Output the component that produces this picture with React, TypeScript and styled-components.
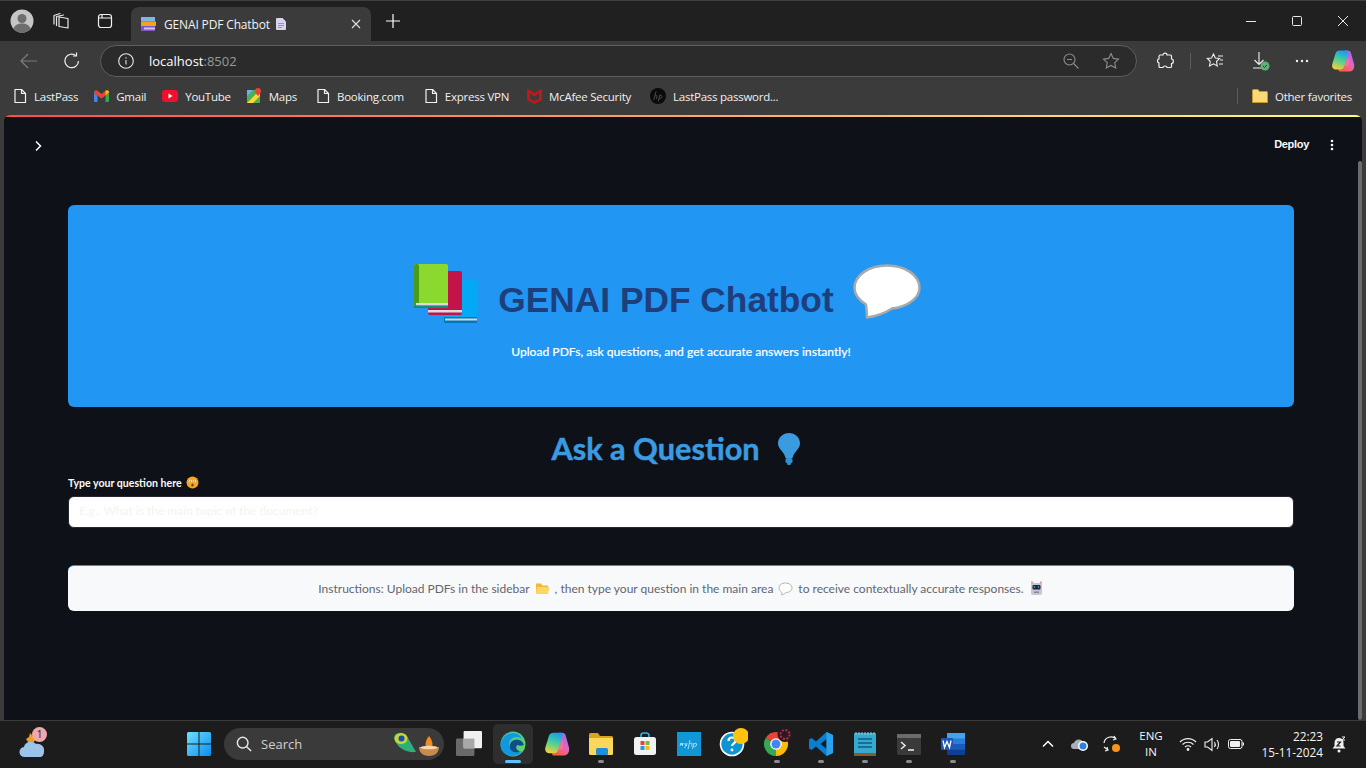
import React from 'react';
import styled, { createGlobalStyle } from 'styled-components';

const Global = createGlobalStyle`
	html, body {
		margin: 0;
		padding: 0;
		background: #202020;
	}
	* {
		box-sizing: border-box;
	}
`;

const UI = `'Open Sans', 'Noto Sans', sans-serif`;
const ST = `Lato, 'Noto Sans', sans-serif`;

const Screen = styled.div`
	width: 1366px;
	height: 768px;
	display: flex;
	flex-direction: column;
	overflow: hidden;
	background: #202020;
	font-family: ${UI};
	color: #fff;
`;

const TabStrip = styled.div`
	height: 41px;
	flex: none;
	display: flex;
	align-items: flex-end;
	padding-left: 10px;
	background: #202020;
	border-top: 1px solid #3f3f3f;
`;

const StripIcon = styled.div<{ $w: number }>`
	width: ${(p) => p.$w}px;
	height: 40px;
	flex: none;
	display: flex;
	align-items: center;
	justify-content: flex-start;
`;

const Tab = styled.div`
	width: 240px;
	height: 34px;
	flex: none;
	display: flex;
	align-items: center;
	padding: 0 10px 0 9px;
	background: #3b3b3b;
	border-radius: 8px 8px 0 0;
	font-size: 12px;
	color: #f2f2f2;
`;

const TabTitle = styled.span`
	margin-left: 8px;
	flex: 1;
	display: flex;
	align-items: center;
	gap: 6px;
	white-space: nowrap;
	letter-spacing: -0.15px;
`;

const NewTab = styled.div`
	width: 44px;
	height: 40px;
	display: flex;
	align-items: center;
	justify-content: center;
	flex: none;
`;

const WindowControls = styled.div`
	margin-left: auto;
	display: flex;
	align-self: stretch;
	align-items: center;
`;

const WindowButton = styled.div`
	width: 46px;
	height: 40px;
	display: flex;
	align-items: center;
	justify-content: center;
`;

const Toolbar = styled.div`
	height: 41px;
	flex: none;
	display: flex;
	align-items: center;
	background: #3b3b3b;
	padding: 0 0 1px 19px;
`;

const NavIcon = styled.div<{ $w: number }>`
	width: ${(p) => p.$w}px;
	height: 24px;
	flex: none;
	display: flex;
	align-items: center;
`;

const AddressBar = styled.div`
	width: 1037px;
	height: 32px;
	margin-left: -3px;
	flex: none;
	display: flex;
	align-items: center;
	background: #2b2b2b;
	border: 1px solid #5e5e5e;
	border-radius: 16px;
	padding: 0 16px 0 17px;
	font-size: 13px;
`;

const Url = styled.span`
	margin-left: 15px;
	flex: 1;
	color: #fff;
	font-weight: 500;
`;

const UrlPort = styled.span`
	color: #9a9a9a;
	font-weight: 400;
`;

const ToolbarRight = styled.div`
	display: flex;
	align-items: center;
	margin-left: 20px;
	flex: 1;
`;

const Glyph = styled.span<{ $ml: number }>`
	display: flex;
	margin-left: ${(p) => p.$ml}px;
`;

const ToolbarDivider = styled.div`
	width: 1px;
	height: 16px;
	margin: 0 15px;
	background: #5c5c5c;
`;

const Bookmarks = styled.div`
	height: 33px;
	flex: none;
	display: flex;
	align-items: center;
	background: #3b3b3b;
	padding: 0 14px 5px 13px;
	font-size: 11.5px;
	color: #f0f0f0;
`;

const Bookmark = styled.div<{ $gap?: number }>`
	display: flex;
	align-items: center;
	gap: 7px;
	margin-right: ${(p) => p.$gap ?? 17}px;
	white-space: nowrap;
	letter-spacing: -0.25px;
`;

const BookmarkDivider = styled.div`
	margin-left: auto;
	width: 1px;
	height: 16px;
	background: #5c5c5c;
	margin-right: 14px;
`;

const PageFrame = styled.div`
	height: 605px;
	flex: none;
	padding: 0 4px;
	background: #3b3b3b;
`;

const BrowserPage = styled.div`
	height: 100%;
	display: flex;
	flex-direction: column;
	position: relative;
	background: #0e1117;
	border-radius: 6px 6px 0 0;
	overflow: hidden;
`;

const Decoration = styled.div`
	height: 2px;
	flex: none;
	background: linear-gradient(90deg, #ff4b4b, #fffd80);
`;

const StHeader = styled.div`
	height: 54px;
	flex: none;
	display: flex;
	align-items: center;
	padding: 4px 28px 0 28px;
`;

const DeployLabel = styled.span`
	margin: 0 21px 4px auto;
	font-family: 'Liberation Sans', sans-serif;
	font-size: 11px;
	font-weight: 700;
	letter-spacing: -0.3px;
	color: #fafafa;
`;

const MenuDots = styled.svg`
	margin-bottom: 2px;
`;

const Main = styled.div`
	display: flex;
	flex-direction: column;
	padding: 34px 68px 0 64px;
`;

const Hero = styled.div`
	height: 202px;
	display: flex;
	flex-direction: column;
	align-items: center;
	background: #2196f3;
	border-radius: 6px;
	padding-top: 59px;
`;

const HeroTitle = styled.div`
	display: flex;
	align-items: flex-start;
	height: 60px;
	margin-right: 27px;
`;

const HeroText = styled.h1`
	margin: 16px 19px 0 20px;
	font-family: 'Liberation Sans', sans-serif;
	font-size: 35.3px;
	line-height: 40px;
	font-weight: 700;
	color: #1e3f7c;
	white-space: nowrap;
`;

const HeroSub = styled.p`
	margin: 19px 0 0;
	font-family: ${ST};
	font-size: 12.1px;
	line-height: 18px;
	font-weight: 500;
	color: #fff;
	-webkit-text-stroke: 0.15px #fff;
`;

const AskTitle = styled.h2`
	margin: 22px 10px 0 0;
	height: 40px;
	display: flex;
	justify-content: center;
	align-items: center;
	gap: 17px;
	font-family: ${ST};
	font-size: 30.7px;
	line-height: 40px;
	font-weight: 700;
	color: #3a9be0;
	-webkit-text-stroke: 0.5px #3a9be0;
`;

const InputLabel = styled.label`
	display: flex;
	align-items: center;
	gap: 4px;
	margin-top: 6px;
	height: 16px;
	font-family: ${ST};
	font-size: 10.6px;
	font-weight: 700;
	color: #fafafa;
`;

const QuestionInput = styled.input`
	display: block;
	width: 100%;
	height: 32px;
	margin-top: 5px;
	padding: 0 10px 4px;
	background: #fff;
	border: 1px solid #262730;
	border-radius: 6px;
	font-family: ${ST};
	font-size: 12px;
	outline: none;
	&::placeholder {
		color: #f3f3f3;
	}
`;

const InstructionBox = styled.div`
	height: 46px;
	margin-top: 37px;
	display: flex;
	align-items: center;
	justify-content: center;
	gap: 5px;
	background: #f8f9fa;
	border-top: 1px solid #2196f3;
	border-radius: 6px;
	font-family: ${ST};
	font-size: 12px;
	color: #5f6672;
	white-space: pre;
`;

const ScrollThumb = styled.div`
	position: absolute;
	right: 0;
	top: 46px;
	bottom: 0;
	width: 4px;
	background: #6b6b6b;
	border-radius: 2px;
`;

const Taskbar = styled.div`
	height: 48px;
	flex: none;
	margin-top: auto;
	display: flex;
	align-items: center;
	padding-bottom: 1px;
	background: #1c1c1c;
	border-top: 1px solid #3a3a3a;
`;

const Weather = styled.div`
	width: 187px;
	padding-left: 19px;
	flex: none;
	display: flex;
	align-items: center;
`;

const WeatherIcon = styled.div`
	width: 28px;
	height: 28px;
	position: relative;
`;

const Badge = styled.span`
	position: absolute;
	left: 13px;
	top: -3px;
	width: 15px;
	height: 15px;
	display: flex;
	align-items: center;
	justify-content: center;
	border-radius: 50%;
	background: #f4a6ae;
	font-size: 10px;
	line-height: 15px;
	color: #1c1c1c;
`;

const SearchBox = styled.div`
	width: 220px;
	height: 32px;
	margin-left: 13px;
	flex: none;
	display: flex;
	align-items: center;
	padding: 0 3px 0 12px;
	background: #3a3a3a;
	border-radius: 16px;
	font-size: 13px;
	color: #d0d0d0;
`;

const SearchLabel = styled.span`
	margin-left: 9px;
	flex: 1;
`;

const TaskIcons = styled.div`
	display: flex;
	align-items: center;
	gap: 4px;
	margin-left: 5px;
`;

const TaskIcon = styled.div<{ $active?: boolean; $dot?: boolean }>`
	width: 40px;
	height: 40px;
	display: flex;
	align-items: center;
	justify-content: center;
	position: relative;
	border-radius: 5px;
	background: ${(p) => (p.$active ? '#2e2e2e' : 'transparent')};
	&::after {
		content: '';
		display: ${(p) => (p.$active || p.$dot ? 'block' : 'none')};
		position: absolute;
		bottom: 1px;
		left: 50%;
		transform: translateX(-50%);
		width: ${(p) => (p.$active ? 16 : 6)}px;
		height: 3px;
		border-radius: 2px;
		background: ${(p) => (p.$active ? '#5cc2ff' : '#8c8c8c')};
	}
`;

const Tray = styled.div`
	margin-left: auto;
	padding-right: 11px;
	display: flex;
	align-items: center;
	color: #f5f5f5;
	font-size: 11.5px;
`;

const TrayIcon = styled.div<{ $w: number; $ml?: number }>`
	width: ${(p) => p.$w}px;
	margin-left: ${(p) => p.$ml ?? 0}px;
	display: flex;
	align-items: center;
	justify-content: center;
	flex: none;
`;

const Lang = styled.div`
	width: 44px;
	margin-left: 1px;
	text-align: center;
	line-height: 16px;
`;

const Clock = styled.div`
	width: 72px;
	margin-left: 3px;
	text-align: right;
	line-height: 16px;
	font-size: 11.8px;
`;

const stroke = { fill: 'none', stroke: 'currentColor', strokeWidth: 1.2, strokeLinecap: 'round', strokeLinejoin: 'round' } as const;

const Page = () => (
	<svg width="14" height="16" viewBox="0 0 14 16" {...stroke} color="#f2f2f2">
		<path d="M2 1.5h6.5L12.5 5.500v9H2z" />
		<path d="M8.500 1.500v4h4" />
	</svg>
);

const Books = () => (
	<svg width="64" height="59" viewBox="0 0 64 59">
		<rect x="30" y="16" width="33" height="43" rx="2" fill="#03a9f4" />
		<rect x="30" y="53" width="33" height="6" rx="1" fill="#0277bd" />
		<rect x="31" y="54.500" width="32" height="2" fill="#cfd8dc" />
		<rect x="14" y="7" width="34" height="44" rx="2" fill="#c2134b" />
		<rect x="14" y="46" width="34" height="2.500" fill="#d8dcdc" />
		<rect x="0" y="0" width="34" height="44" rx="2" fill="#8bd92f" />
		<rect x="0" y="0" width="5" height="44" rx="2" fill="#4a9a1c" />
		<rect x="2" y="39" width="32" height="2.500" fill="#d8dcdc" />
		<rect x="0" y="41.500" width="34" height="2.500" fill="#0f8f77" />
	</svg>
);

const Bubble = () => (
	<svg width="68" height="55" viewBox="0 0 68 55">
		<path
			d="M34 1.500C52 1.500 66.500 11 66.500 24C66.500 34 54 43 39 44.500C32 49 25 52 14 53.500C14 49 13.500 44 13 40.500C6 36 1.500 30 1.500 24C1.500 11 16 1.500 34 1.500Z"
			fill="#fff"
			stroke="#a9a9a9"
			strokeWidth="2.500"
			strokeLinejoin="round"
		/>
	</svg>
);

const Bulb = () => (
	<svg width="24" height="34" viewBox="0 0 24 34">
		<path d="M12 1C18 1 23 5.500 23 11.500C23 17 16.500 20 15.500 26H8.500C7.500 20 1 17 1 11.500C1 5.500 6 1 12 1Z" fill="#3a9be0" />
		<rect x="8.500" y="26" width="7" height="5" rx="1.500" fill="#3090d0" />
		<rect x="10" y="30" width="4" height="3" rx="1.500" fill="#3090d0" />
	</svg>
);

const ThinkFace = () => (
	<svg width="13" height="14" viewBox="0 0 13 14">
		<circle cx="6.500" cy="6.500" r="6" fill="#f5a623" />
		<circle cx="4.500" cy="5" r="1.300" fill="#fff" />
		<circle cx="8.500" cy="5" r="1.300" fill="#fff" />
		<circle cx="4.500" cy="5" r=".6" fill="#332" />
		<circle cx="8.500" cy="5" r=".6" fill="#332" />
		<ellipse cx="6.500" cy="9" rx="1.200" ry="1.500" fill="#7a3b12" />
	</svg>
);

const SmallFolder = () => (
	<svg width="15" height="13" viewBox="0 0 15 13">
		<path d="M1 1.500h5l1.500 2H13v8H1z" fill="#f5b82e" />
		<path d="M2 5h12.500l-1.500 7H1z" fill="#fdd663" />
	</svg>
);

const SmallBubble = () => (
	<svg width="15" height="14" viewBox="0 0 15 14">
		<path d="M7.500 1C11 1 14 3 14 6S11 10.500 8 10.500C6.500 12 5 12.500 3.500 13C4 12 4 11 3.500 10C2 9 1 7.500 1 6C1 3 4 1 7.500 1Z" fill="#fff" stroke="#b5b5b5" strokeWidth="1" />
	</svg>
);

const Robot = () => (
	<svg width="15" height="15" viewBox="0 0 15 15">
		<rect x="2" y="2" width="11" height="12" rx="2" fill="#c9c3d2" />
		<rect x="3.500" y="4" width="8" height="4.500" rx="1" fill="#1f2733" />
		<circle cx="5.500" cy="6" r=".8" fill="#4fc3f7" />
		<circle cx="9.500" cy="6" r=".8" fill="#4fc3f7" />
		<path d="M3 .5v2M12 .5v2" stroke="#e53935" strokeWidth="1" />
		<rect x="5" y="10.500" width="5" height="1.500" fill="#8a8494" />
	</svg>
);

const Windows = () => (
	<svg width="24" height="24" viewBox="0 0 24 24">
		<defs>
			<linearGradient id="win" x1="0" y1="0" x2="1" y2="1">
				<stop offset="0" stopColor="#6ee0fb" />
				<stop offset="1" stopColor="#0a8df0" />
			</linearGradient>
		</defs>
		<path d="M0 1.500A1.500 1.500 0 0 1 1.500 0H11.500V11.500H0ZM12.500 0H22.500A1.500 1.500 0 0 1 24 1.500V11.500H12.500ZM0 12.500H11.500V24H1.500A1.500 1.500 0 0 1 0 22.500ZM12.500 12.500H24V22.500A1.500 1.500 0 0 1 22.500 24H12.500Z" fill="url(#win)" />
	</svg>
);

const Edge = () => (
	<svg width="26" height="26" viewBox="0 0 24 24">
		<defs>
			<linearGradient id="edgeA" x1="0" y1="0" x2="1" y2="1">
				<stop offset="0" stopColor="#2bc4b4" />
				<stop offset="1" stopColor="#6ed85a" />
			</linearGradient>
		</defs>
		<circle cx="12" cy="12" r="11.500" fill="url(#edgeA)" />
		<path d="M.5 13C1 7 6 2 12 2c4 0 7 2 8 5-3-2.500-9-2-11 2-2 4 1 9 6 10 2 .5 4 .3 5.500-.5-2 3-5 4.500-8.500 4.500C5.500 23.500 .5 19 .5 13Z" fill="#1398e0" />
		<path d="M9 14c0-4 3-6 6.500-6 3.500 0 6 2 6.500 5-2 1-4 .5-6 0-2 2-1 5 2.500 5.500-1 1-3 1.500-4.500 1-3-.5-5-2.500-5-5.500Z" fill="#114c8c" />
	</svg>
);

const Copilot = ({ id, size = 24 }: { id: string; size?: number }) => (
	<svg width={size} height={size} viewBox="0 0 24 24">
		<defs>
			<linearGradient id={`${id}A`} x1=".6" y1="0" x2=".3" y2="1">
				<stop offset="0" stopColor="#1f9bf0" />
				<stop offset=".45" stopColor="#3fcf9f" />
				<stop offset="1" stopColor="#f4d13a" />
			</linearGradient>
			<linearGradient id={`${id}B`} x1=".8" y1="0" x2=".3" y2="1">
				<stop offset="0" stopColor="#8a6cf0" />
				<stop offset=".5" stopColor="#e463c8" />
				<stop offset="1" stopColor="#f8603c" />
			</linearGradient>
		</defs>
		<path d="M14 1.500H17C18.500 1.500 19.500 2.500 20 4L23 15C24 19 22 22.500 18.500 22.500H9C7.500 22.500 7 21 8 19.500L12 14Z" fill={`url(#${id}B)`} />
		<path d="M8.500 1.500H15C16.800 1.500 17.500 3 17 4.500L13.500 16.500C12.800 19 11.500 20.500 9 20.500H5C2 20.500 .5 18 1.300 15L4.500 4.500C5 2.800 6.500 1.500 8.500 1.500Z" fill={`url(#${id}A)`} />
		<path d="M11 17h4.500c1.300 0 2-.8 2-2V8l-3 6.500c-.5 1.300-2 2.500-3.500 2.500Z" fill="#f27a8c" />
	</svg>
);

const Explorer = () => (
	<svg width="24" height="22" viewBox="0 0 24 22">
		<path d="M0 1.500A1.500 1.500 0 0 1 1.500 0H9l2 3h11.500A1.500 1.500 0 0 1 24 4.500V8H0Z" fill="#d9a520" />
		<path d="M0 5h24v15.500A1.500 1.500 0 0 1 22.500 22H1.500A1.500 1.500 0 0 1 0 20.500Z" fill="#fbd75b" />
		<rect x="7" y="15" width="12" height="7" rx="1.500" fill="#1f8fd6" />
	</svg>
);

const Store = () => (
	<svg width="24" height="24" viewBox="0 0 24 24">
		<path d="M8 6V3.500A2.500 2.500 0 0 1 10.500 1h3A2.500 2.500 0 0 1 16 3.500V6" fill="none" stroke="#2bb5ee" strokeWidth="1.600" />
		<rect x="1" y="5" width="22" height="18" rx="2.500" fill="#f2f2f2" />
		<rect x="7.500" y="9" width="4" height="4" fill="#ea4335" />
		<rect x="12.500" y="9" width="4" height="4" fill="#6fbf3b" />
		<rect x="7.500" y="14" width="4" height="4" fill="#1e9be8" />
		<rect x="12.500" y="14" width="4" height="4" fill="#fbbc05" />
	</svg>
);

const HpApp = () => (
	<svg width="24" height="24" viewBox="0 0 24 24">
		<rect width="24" height="24" fill="#0f97d6" />
		<path d="M3 14l1-3 1 2 1-2-.7 3M8 11l.6 3-1 2M10 11l-.6 3M13 8l-2 9M13 12c1.500-1.500 2.500-1 2 .5l-.7 2M17 11l-1.500 6M17 12c2-1.500 3-.5 2.500 1-.5 1.500-2 2-3 1.500" fill="none" stroke="#cbeefb" strokeWidth=".8" />
	</svg>
);

const Help = () => (
	<svg width="30" height="32" viewBox="0 0 30 32">
		<circle cx="14" cy="16" r="11.500" fill="#0f93d2" stroke="#fff" strokeWidth="1.600" />
		<path d="M10.500 13c0-2 1.500-3.500 3.500-3.500s3.500 1.300 3.500 3.200c0 2.800-3.500 2.800-3.500 5.300" fill="none" stroke="#fff" strokeWidth="2.200" />
		<circle cx="14" cy="22" r="1.400" fill="#fff" />
		<circle cx="23" cy="8" r="8" fill="#fdc30f" />
	</svg>
);

const Chrome = () => (
	<svg width="30" height="30" viewBox="0 0 30 30">
		<path d="M14 15L3.600 9A12 12 0 0 1 24.400 9Z" fill="#ea4335" />
		<path d="M14 15L24.400 9A12 12 0 0 1 14 27Z" fill="#fbbc05" />
		<path d="M14 15L14 27A12 12 0 0 1 3.600 9Z" fill="#34a853" />
		<circle cx="14" cy="15" r="5.800" fill="#fff" />
		<circle cx="14" cy="15" r="4.500" fill="#4285f4" />
		<circle cx="23" cy="5.500" r="7.500" fill="#2a1a20" />
		<circle cx="23" cy="5.500" r="4.500" fill="none" stroke="#a83250" strokeWidth="2" strokeDasharray="2 1.500" />
	</svg>
);

const VsCode = () => (
	<svg width="24" height="24" viewBox="0 0 24 24">
		<path d="M17.500 0 24 3v18l-6.500 3L7 14.500 2.500 18 0 16.500V7.500L2.500 6 7 9.500ZM17.500 7l-6 5 6 5Z" fill="#0a7fd0" />
		<path d="M17.500 0 24 3v18l-6.500 3Z" fill="#2ba0ee" />
	</svg>
);

const Notepad = () => (
	<svg width="22" height="24" viewBox="0 0 22 24">
		<rect y="1" width="22" height="23" rx="1" fill="#35a9cf" />
		<rect y="21" width="22" height="3" fill="#8c5a24" />
		<path d="M4 7h14M4 11h14M4 15h14" stroke="#0f5c7c" strokeWidth="1.600" />
		<path d="M2 0v3M5 0v3M8 0v3M11 0v3M14 0v3M17 0v3M20 0v3" stroke="#7fd3ea" strokeWidth="1" />
	</svg>
);

const Terminal = () => (
	<svg width="24" height="21" viewBox="0 0 24 21">
		<rect width="24" height="21" rx="1.500" fill="#3a3a3a" />
		<rect width="24" height="4" fill="#6b6b6b" />
		<path d="M4 8l4 3.500L4 15" fill="none" stroke="#e6e6e6" strokeWidth="1.600" />
		<path d="M11 16h6" stroke="#e6e6e6" strokeWidth="1.600" />
	</svg>
);

const Word = () => (
	<svg width="24" height="22" viewBox="0 0 24 22">
		<rect x="6" width="18" height="22" rx="1" fill="#2b7cd3" />
		<rect x="6" y="0" width="18" height="5.500" fill="#41a5ee" />
		<rect x="6" y="11" width="18" height="5.500" fill="#185abd" />
		<rect x="6" y="16.500" width="18" height="5.500" fill="#103f91" />
		<rect y="5" width="12" height="12" rx="1" fill="#1a57b5" />
		<path d="M2 7.500l1.500 7 2.500-6 2.500 6 1.500-7" fill="none" stroke="#fff" strokeWidth="1.300" />
	</svg>
);

const Chevron = ({ up }: { up?: boolean }) => (
	<svg width="12" height="12" viewBox="0 0 12 12" fill="none" stroke="#fff" strokeWidth="1.500">
		{up ? <path d="M1 8.500l5-5 5 5" /> : <path d="M4 1.500l4.500 4.500L4 10.500" />}
	</svg>
);

export default function App() {
	return (
		<Screen>
			<Global />
			<TabStrip>
				<StripIcon $w={42}>
					<svg width="24" height="24" viewBox="0 0 24 24">
						<circle cx="12" cy="12" r="11.500" fill="#c6c6c6" />
						<circle cx="12" cy="9.500" r="4.500" fill="#6e6e6e" />
						<path d="M3.500 20c1-4 4.500-5.500 8.500-5.500s7.500 1.500 8.500 5.500a11.500 11.500 0 0 1-17 0Z" fill="#6e6e6e" />
					</svg>
				</StripIcon>
				<StripIcon $w={45}>
					<svg width="18" height="18" viewBox="0 0 18 18" {...stroke} color="#e6e6e6">
						<path d="M7 5l9 1.500v9.500l-9-1.500zM4.500 13.500V4.500l7-1.500M2 12V3.500L8 1.500" />
					</svg>
				</StripIcon>
				<StripIcon $w={34}>
					<svg width="16" height="16" viewBox="0 0 16 16" {...stroke} color="#f0f0f0">
						<rect x="1.500" y="1.500" width="13" height="13" rx="2.500" />
						<path d="M1.500 5h13M5 1.500V5" />
					</svg>
				</StripIcon>
				<Tab>
					<svg width="16" height="16" viewBox="0 0 16 16">
						<rect x="1" y="1" width="14" height="4.500" fill="#7db6e8" />
						<rect x="1" y="5.500" width="15" height="4.500" fill="#f5a21c" />
						<rect x="1" y="10" width="14" height="5" fill="#7e57c2" />
						<rect x="4" y="11.500" width="11" height="2" fill="#cfc6e6" />
					</svg>
					<TabTitle>
						GENAI PDF Chatbot
						<svg width="10" height="12" viewBox="0 0 10 12">
							<path d="M0 1a1 1 0 0 1 1-1h5.500L10 3.500V11a1 1 0 0 1-1 1H1a1 1 0 0 1-1-1Z" fill="#dcd3ee" />
							<path d="M2 5.500h6M2 7.500h6M2 9.500h4" stroke="#9a8fb8" strokeWidth="1" />
						</svg>
					</TabTitle>
					<svg width="10" height="10" viewBox="0 0 10 10" stroke="#e0e0e0" strokeWidth="1.100">
						<path d="M1 1l8 8M9 1l-8 8" />
					</svg>
				</Tab>
				<NewTab>
					<svg width="14" height="14" viewBox="0 0 14 14" stroke="#fff" strokeWidth="1.200">
						<path d="M7 0v14M0 7h14" />
					</svg>
				</NewTab>
				<WindowControls>
					<WindowButton>
						<svg width="10" height="10" viewBox="0 0 10 10" stroke="#e8e8e8" strokeWidth="1">
							<path d="M0 5.500h10" />
						</svg>
					</WindowButton>
					<WindowButton>
						<svg width="10" height="10" viewBox="0 0 10 10" fill="none" stroke="#e8e8e8" strokeWidth="1">
							<rect x=".5" y=".5" width="9" height="9" rx="1" />
						</svg>
					</WindowButton>
					<WindowButton>
						<svg width="10" height="10" viewBox="0 0 10 10" stroke="#e8e8e8" strokeWidth="1">
							<path d="M0 0l10 10M10 0L0 10" />
						</svg>
					</WindowButton>
				</WindowControls>
			</TabStrip>
			<Toolbar>
				<NavIcon $w={44}>
					<svg width="20" height="20" viewBox="0 0 20 20" fill="none" stroke="#7d7d7d" strokeWidth="1.200">
						<path d="M2 10h16M9 3l-7 7 7 7" />
					</svg>
				</NavIcon>
				<NavIcon $w={40}>
					<svg width="18" height="18" viewBox="0 0 18 18" fill="none" stroke="#f0f0f0" strokeWidth="1.200">
						<path d="M15.500 9A6.800 6.800 0 1 1 13 3.600" />
						<path d="M13.500 .5v3.500H10" />
					</svg>
				</NavIcon>
				<AddressBar>
					<svg width="16" height="16" viewBox="0 0 16 16" fill="none" stroke="#e8e8e8" strokeWidth="1.100">
						<circle cx="8" cy="8" r="7.300" />
						<path d="M8 7v4.500M8 4.200v1.200" />
					</svg>
					<Url>
						localhost<UrlPort>:8502</UrlPort>
					</Url>
					<svg width="16" height="16" viewBox="0 0 16 16" fill="none" stroke="#8d8d8d" strokeWidth="1.100">
						<circle cx="6.500" cy="6.500" r="5.500" />
						<path d="M4 6.500h5M10.500 10.500l5 5" />
					</svg>
					<Glyph $ml={23}>
						<svg width="18" height="18" viewBox="0 0 18 18" fill="none" stroke="#8d8d8d" strokeWidth="1.100">
							<path d="M9 1.500l2.300 4.900 5.200.7-3.800 3.600 1 5.300L9 13.400l-4.700 2.600 1-5.300L1.500 7.100l5.200-.7Z" />
						</svg>
					</Glyph>
				</AddressBar>
				<ToolbarRight>
					<svg width="18" height="18" viewBox="0 0 18 18" fill="none" stroke="#f0f0f0" strokeWidth="1.200">
						<path d="M6 3c0-2.500 4-2.500 4 0h3.500a1 1 0 0 1 1 1v3c2.500 0 2.500 4.500 0 4.500v3a1 1 0 0 1-1 1H10c0-2-4-2-4 0H3a1 1 0 0 1-1-1v-3.500C0 10.500 0 7 2 7V5c0-1 .5-2 1-2Z" />
					</svg>
					<ToolbarDivider />
					<svg width="18" height="18" viewBox="0 0 18 18" fill="none" stroke="#f0f0f0" strokeWidth="1.100">
						<path d="M7.500 2l1.800 4 4.200.5-3 3 .8 4.500-3.800-2.200L3.500 14l.8-4.500-3-3L5.500 6Z" />
						<path d="M12 4h5M14 8h3M13 12h4" />
					</svg>
					<Glyph $ml={26}>
						<svg width="20" height="20" viewBox="0 0 20 20">
							<path d="M9 1v12M4.500 9l4.500 4.500L13.500 9M3 17h12" fill="none" stroke="#f0f0f0" strokeWidth="1.100" />
							<circle cx="15" cy="15" r="4.500" fill="#5db075" />
							<path d="M13 15l1.500 1.500 2.500-2.500" fill="none" stroke="#1f4a2c" strokeWidth="1" />
						</svg>
					</Glyph>
					<Glyph $ml={25}>
						<svg width="14" height="4" viewBox="0 0 14 4" fill="#f0f0f0">
							<circle cx="2" cy="2" r="1.200" />
							<circle cx="7" cy="2" r="1.200" />
							<circle cx="12" cy="2" r="1.200" />
						</svg>
					</Glyph>
					<Glyph $ml={22}>
						<Copilot id="cpTool" />
					</Glyph>
				</ToolbarRight>
			</Toolbar>
			<Bookmarks>
				<Bookmark $gap={16}><Page />LastPass</Bookmark>
				<Bookmark $gap={16}>
					<svg width="15" height="12" viewBox="0 0 15 12">
						<path d="M0 2.500V11a1 1 0 0 0 1 1h2.500V5.500Z" fill="#4285f4" />
						<path d="M15 2.500V11a1 1 0 0 1-1 1h-2.500V5.500Z" fill="#34a853" />
						<path d="M0 2.500C0 .5 2 -.5 3.500 .8L7.500 4l4-3.200C13 -.5 15 .5 15 2.500l-3.500 3L7.500 8.500l-4-3Z" fill="#ea4335" />
						<path d="M11.500 .8C13 -.5 15 .5 15 2.500l-3.500 3Z" fill="#fbbc05" />
					</svg>
					Gmail
				</Bookmark>
				<Bookmark $gap={16}>
					<svg width="16" height="12" viewBox="0 0 16 12">
						<rect width="16" height="12" rx="3" fill="#f00f2c" />
						<path d="M6.500 3.500v5l4-2.500Z" fill="#fff" />
					</svg>
					YouTube
				</Bookmark>
				<Bookmark $gap={19}>
					<svg width="15" height="16" viewBox="0 0 15 16">
						<rect y="2" width="13" height="13" fill="#4caf50" />
						<path d="M0 15L13 2v6l-7 7Z" fill="#fdd835" />
						<path d="M0 2h6L0 8Z" fill="#64b5f6" />
						<path d="M11 0a3 3 0 0 1 3 3c0 2-3 5-3 5S8 5 8 3a3 3 0 0 1 3-3Z" fill="#ea4335" />
					</svg>
					Maps
				</Bookmark>
				<Bookmark $gap={20}><Page />Booking.com</Bookmark>
				<Bookmark $gap={18}><Page />Express VPN</Bookmark>
				<Bookmark $gap={19}>
					<svg width="15" height="16" viewBox="0 0 15 16">
						<path d="M0 1l3.500 1.500L7.500 5l4-2.500L15 1v11l-7.500 4L0 12Z" fill="#c01818" />
						<path d="M3 5.500l4.500 3 4.500-3v5l-4.500 2.500L3 10.500Z" fill="#3b3b3b" />
					</svg>
					McAfee Security
				</Bookmark>
				<Bookmark>
					<svg width="16" height="16" viewBox="0 0 16 16">
						<circle cx="8" cy="8" r="8" fill="#0a0a0a" />
						<path d="M6 3.500L3.800 12M5 8c1.200-1 2.200-.7 2 .5L6.500 11M10 6.500L8.300 13.500M9.500 8c1.500-1 3-.5 2.500 1s-2 2-3 1.500" fill="none" stroke="#4a4a4a" strokeWidth="1" />
					</svg>
					LastPass password...
				</Bookmark>
				<BookmarkDivider />
				<Bookmark $gap={0}>
					<svg width="16" height="14" viewBox="0 0 16 14">
						<path d="M.5 1.500A1 1 0 0 1 1.500 .5H6l1.500 2h7a1 1 0 0 1 1 1V13.500H.5Z" fill="#fbd878" stroke="#c49a24" strokeWidth="1" />
					</svg>
					Other favorites
				</Bookmark>
			</Bookmarks>
			<PageFrame>
				<BrowserPage>
					<Decoration />
					<StHeader>
						<Chevron />
						<DeployLabel>Deploy</DeployLabel>
						<MenuDots width="4" height="12" viewBox="0 0 4 12" fill="#fafafa">
							<circle cx="2" cy="2" r="1.300" />
							<circle cx="2" cy="6" r="1.300" />
							<circle cx="2" cy="10" r="1.300" />
						</MenuDots>
					</StHeader>
					<Main>
						<Hero>
							<HeroTitle>
								<Books />
								<HeroText>GENAI PDF Chatbot</HeroText>
								<Bubble />
							</HeroTitle>
							<HeroSub>Upload PDFs, ask questions, and get accurate answers instantly!</HeroSub>
						</Hero>
						<AskTitle>
							Ask a Question
							<Bulb />
						</AskTitle>
						<InputLabel>
							Type your question here
							<ThinkFace />
						</InputLabel>
						<QuestionInput placeholder="E.g., What is the main topic of the document?" />
						<InstructionBox>
							Instructions: Upload PDFs in the sidebar
							<SmallFolder />
							, then type your question in the main area
							<SmallBubble />
							to receive contextually accurate responses.
							<Robot />
						</InstructionBox>
					</Main>
					<ScrollThumb />
				</BrowserPage>
			</PageFrame>
			<Taskbar>
				<Weather>
					<WeatherIcon>
						<svg width="28" height="28" viewBox="0 0 28 28">
							<path d="M7 9l3-2 1-4 3 3 4-1-1 5-6 5Z" fill="#e8a020" />
							<path d="M6 27a5 5 0 0 1-1-10c1-5 8-7 12-3 5-1 9 3 8 8 0 3-2 5-4 5Z" fill="#9cc4ea" />
						</svg>
						<Badge>1</Badge>
					</WeatherIcon>
				</Weather>
				<Windows />
				<SearchBox>
					<svg width="16" height="16" viewBox="0 0 18 18" fill="none" stroke="#e8e8e8" strokeWidth="1.600">
						<circle cx="7.500" cy="7.500" r="6" />
						<path d="M12 12l5 5" />
					</svg>
					<SearchLabel>Search</SearchLabel>
					<svg width="48" height="26" viewBox="0 0 48 26">
						<path d="M2 4c4-4 11-2 13 3l8 14c-8 1-16-3-19-8C2 10 0 7 2 4Z" fill="#2eae7a" />
						<ellipse cx="8" cy="7.500" rx="6.500" ry="5.500" fill="#c5d23a" />
						<circle cx="8.500" cy="7.500" r="3" fill="#1a4fa8" />
						<path d="M26 16h20c0 5-3.500 9-10 9S26 21 26 16Z" fill="#c98a4a" />
						<path d="M36 5c2.500 3 3.500 6 3.500 8.500s-1.500 3.500-3.500 3.500-3.500-1-3.500-3.500S33.500 8 36 5Z" fill="#f58a1f" />
						<ellipse cx="36" cy="16.500" rx="8.500" ry="1.800" fill="#f5d9b0" />
					</svg>
				</SearchBox>
				<TaskIcons>
					<TaskIcon>
						<svg width="26" height="26" viewBox="0 0 24 24">
							<rect x="0" y="7" width="17" height="16" rx="1" fill="#6a6a6a" />
							<rect x="7" y="0" width="17" height="16" rx="1" fill="#f0f0f0" />
							<rect x="7" y="7" width="10" height="9" fill="#a8a8a8" />
						</svg>
					</TaskIcon>
					<TaskIcon $active><Edge /></TaskIcon>
					<TaskIcon><Copilot id="cpTask" size={26} /></TaskIcon>
					<TaskIcon $dot><Explorer /></TaskIcon>
					<TaskIcon><Store /></TaskIcon>
					<TaskIcon><HpApp /></TaskIcon>
					<TaskIcon><Help /></TaskIcon>
					<TaskIcon $dot><Chrome /></TaskIcon>
					<TaskIcon $dot><VsCode /></TaskIcon>
					<TaskIcon $dot><Notepad /></TaskIcon>
					<TaskIcon $dot><Terminal /></TaskIcon>
					<TaskIcon $dot><Word /></TaskIcon>
				</TaskIcons>
				<Tray>
					<TrayIcon $w={32}><Chevron up /></TrayIcon>
					<TrayIcon $w={32}>
						<svg width="18" height="14" viewBox="0 0 18 14">
							<path d="M3 12a3 3 0 0 1 0-6c1-4 7-5 9-1 3 0 4 2 4 4v3Z" fill="#aab0b8" />
							<circle cx="12" cy="9" r="5" fill="#fff" />
							<circle cx="12" cy="9" r="3.500" fill="#2a7fe0" />
						</svg>
					</TrayIcon>
					<TrayIcon $w={32}>
						<svg width="20" height="20" viewBox="0 0 20 20">
							<path d="M2 9a7 7 0 0 1 12-4M2 13l4 3M12 2l2 3-3 1M3 17l3-1-1-3" fill="none" stroke="#ededed" strokeWidth="1.200" />
							<circle cx="14" cy="14" r="4" fill="#f7941d" />
						</svg>
					</TrayIcon>
					<Lang>
						ENG
						<br />
						IN
					</Lang>
					<TrayIcon $w={24} $ml={3}>
						<svg width="18" height="14" viewBox="0 0 18 14" fill="none" stroke="#f0f0f0" strokeWidth="1.200">
							<path d="M1 5c4.500-4.500 11.500-4.500 16 0M3.500 7.500c3-3 8-3 11 0M6 10c1.800-1.500 4.200-1.500 6 0" />
							<circle cx="9" cy="12.500" r=".8" fill="#f0f0f0" />
						</svg>
					</TrayIcon>
					<TrayIcon $w={24}>
						<svg width="17" height="15" viewBox="0 0 17 15" fill="none" stroke="#f0f0f0" strokeWidth="1.100">
							<path d="M1 5h2.500L8 1.500v12L3.500 10H1ZM10.500 5c1 1.500 1 3.500 0 5M13 3c2 2.500 2 6.500 0 9" />
						</svg>
					</TrayIcon>
					<TrayIcon $w={24}>
						<svg width="16" height="10" viewBox="0 0 16 10">
							<rect x=".5" y=".5" width="13.500" height="9" rx="2" fill="none" stroke="#f0f0f0" strokeWidth="1" />
							<rect x="2" y="2" width="10" height="6" rx="1" fill="#f0f0f0" />
							<rect x="14.500" y="3.500" width="1.500" height="3" fill="#f0f0f0" />
						</svg>
					</TrayIcon>
					<Clock>
						22:23
						<br />
						15-11-2024
					</Clock>
					<TrayIcon $w={32}>
						<svg width="16" height="17" viewBox="0 0 16 17">
							<path d="M8 2c3 0 4.500 2 4.500 5v3l2 2.500H1.500L3.500 10V7C3.500 4 5 2 8 2Z" fill="#f0f0f0" />
							<circle cx="8" cy="15" r="1.500" fill="#f0f0f0" />
							<path d="M6 6h3.500L6 10h3.500" fill="none" stroke="#1c1c1c" strokeWidth="1.200" />
							<path d="M11 1h3l-3 3h3" fill="none" stroke="#f0f0f0" strokeWidth="1" />
						</svg>
					</TrayIcon>
				</Tray>
			</Taskbar>
		</Screen>
	);
}
